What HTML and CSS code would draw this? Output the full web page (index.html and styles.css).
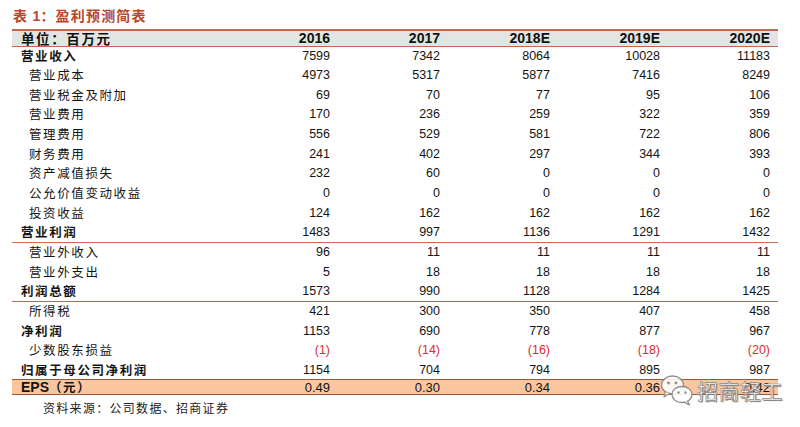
FILE: index.html
```html
<!DOCTYPE html>
<html lang="zh-CN">
<head>
<meta charset="utf-8">
<title>盈利预测简表</title>
<link rel="stylesheet" href="styles.css">
</head>
<body>
<div class="page">
  <div class="title">表 <span class="num">1</span>：盈利预测简表</div>
  <table class="fc">
    <colgroup>
      <col class="c-lbl"><col class="c-num"><col class="c-num"><col class="c-num"><col class="c-num"><col class="c-num">
    </colgroup>
    <thead>
      <tr class="hd"><th class="lbl">单位：百万元</th><th>2016</th><th>2017</th><th>2018E</th><th>2019E</th><th>2020E</th></tr>
    </thead>
    <tbody>
      <tr class="main"><td class="lbl">营业收入</td><td>7599</td><td>7342</td><td>8064</td><td>10028</td><td>11183</td></tr>
      <tr class="sub"><td class="lbl">营业成本</td><td>4973</td><td>5317</td><td>5877</td><td>7416</td><td>8249</td></tr>
      <tr class="sub"><td class="lbl">营业税金及附加</td><td>69</td><td>70</td><td>77</td><td>95</td><td>106</td></tr>
      <tr class="sub"><td class="lbl">营业费用</td><td>170</td><td>236</td><td>259</td><td>322</td><td>359</td></tr>
      <tr class="sub"><td class="lbl">管理费用</td><td>556</td><td>529</td><td>581</td><td>722</td><td>806</td></tr>
      <tr class="sub"><td class="lbl">财务费用</td><td>241</td><td>402</td><td>297</td><td>344</td><td>393</td></tr>
      <tr class="sub"><td class="lbl">资产减值损失</td><td>232</td><td>60</td><td>0</td><td>0</td><td>0</td></tr>
      <tr class="sub"><td class="lbl">公允价值变动收益</td><td>0</td><td>0</td><td>0</td><td>0</td><td>0</td></tr>
      <tr class="sub"><td class="lbl">投资收益</td><td>124</td><td>162</td><td>162</td><td>162</td><td>162</td></tr>
      <tr class="main rule"><td class="lbl">营业利润</td><td>1483</td><td>997</td><td>1136</td><td>1291</td><td>1432</td></tr>
      <tr class="sub"><td class="lbl">营业外收入</td><td>96</td><td>11</td><td>11</td><td>11</td><td>11</td></tr>
      <tr class="sub"><td class="lbl">营业外支出</td><td>5</td><td>18</td><td>18</td><td>18</td><td>18</td></tr>
      <tr class="main rule rule-dark"><td class="lbl">利润总额</td><td>1573</td><td>990</td><td>1128</td><td>1284</td><td>1425</td></tr>
      <tr class="sub"><td class="lbl">所得税</td><td>421</td><td>300</td><td>350</td><td>407</td><td>458</td></tr>
      <tr class="main"><td class="lbl">净利润</td><td>1153</td><td>690</td><td>778</td><td>877</td><td>967</td></tr>
      <tr class="sub neg"><td class="lbl">少数股东损益</td><td>(1)</td><td>(14)</td><td>(16)</td><td>(18)</td><td>(20)</td></tr>
      <tr class="main"><td class="lbl">归属于母公司净利润</td><td>1154</td><td>704</td><td>794</td><td>895</td><td>987</td></tr>
      <tr class="eps"><td class="lbl"><span class="en">EPS</span>（元）</td><td>0.49</td><td>0.30</td><td>0.34</td><td>0.36</td><td>0.42</td></tr>
    </tbody>
  </table>
  <div class="source">资料来源：公司数据、招商证券</div>

  <div class="wm">
    <svg class="wm-icon" width="34" height="32" viewBox="0 0 34 32" aria-hidden="true">
      <ellipse cx="12.5" cy="11" rx="11" ry="9" fill="#ffffff" fill-opacity="0.85" stroke="#8e8e8e" stroke-width="1.3"/>
      <path d="M5.5 18 L4 23 L9.5 19.5" fill="#ffffff" stroke="#8e8e8e" stroke-width="1.3" stroke-linejoin="round"/>
      <circle cx="8.5" cy="9" r="1.4" fill="#8e8e8e"/>
      <circle cx="16" cy="9" r="1.4" fill="#8e8e8e"/>
      <ellipse cx="22" cy="20.5" rx="10" ry="8" fill="#ffffff" fill-opacity="0.9" stroke="#8e8e8e" stroke-width="1.3"/>
      <path d="M27.5 27 L29.5 31 L24 28.2" fill="#ffffff" stroke="#8e8e8e" stroke-width="1.3" stroke-linejoin="round"/>
      <circle cx="18.5" cy="18.5" r="1.2" fill="#8e8e8e"/>
      <circle cx="25.5" cy="18.5" r="1.2" fill="#8e8e8e"/>
    </svg>
    <span class="wm-text">招商轻工</span>
  </div>
</div>
</body>
</html>
```

FILE: styles.css
```css
html, body {
  margin: 0;
  padding: 0;
  background: #ffffff;
}

.page {
  position: relative;
  width: 800px;
  height: 427px;
  padding: 0 0 0 12px;
  box-sizing: border-box;
  font-family: "Noto Sans CJK SC", "Liberation Sans", sans-serif;
  color: #111111;
}

.title {
  height: 29px;
  line-height: 30px;
  padding-left: 1px;
  font-size: 14px;
  font-weight: 700;
  letter-spacing: 1.2px;
  color: #b8462b;
}

.title .num {
  font-family: "Liberation Sans", sans-serif;
  letter-spacing: 0;
}

.fc {
  border-collapse: collapse;
  table-layout: fixed;
  width: 766px;
}

.c-lbl { width: 216px; }
.c-num { width: 110px; }

.fc th,
.fc td {
  padding: 0 8px 0 0;
  text-align: right;
  white-space: nowrap;
  line-height: 1;
}

.fc td {
  font-family: "Liberation Sans", Arial, sans-serif;
  font-size: 12.5px;
  color: #141414;
}

.hd {
  height: 16px;
  background: #e4e4e4;
  border-top: 2px solid #c4674a;
  border-bottom: 1.5px solid #c4674a;
}

.hd th {
  font-family: "Liberation Sans", Arial, sans-serif;
  font-size: 14px;
  font-weight: 700;
  color: #111111;
}

.fc .lbl {
  text-align: left;
  font-family: "Noto Sans CJK SC", sans-serif;
  font-size: 12.5px;
  letter-spacing: 1.6px;
  padding-left: 9px;
}

.hd .lbl {
  font-size: 13.5px;
  letter-spacing: 1.6px;
}

tbody tr {
  height: 19.65px;
}

.main .lbl {
  font-weight: 700;
}

.sub .lbl {
  font-weight: 400;
  padding-left: 17px;
}

.rule {
  border-bottom: 1.5px solid #c7714f;
}

.rule-dark {
  border-bottom-color: #a8705a;
}

.neg td {
  color: #e02a32;
}

.neg td.lbl {
  color: #141414;
}

.eps {
  height: 14px !important;
  background: #f9c6a0;
  border-top: 1.5px solid #9c5634;
  border-bottom: 1.5px solid #9c5634;
}

.eps td {
  font-size: 13px;
}

.eps .lbl {
  font-weight: 700;
  font-size: 12.5px;
}

.eps .en {
  font-family: "Liberation Sans", Arial, sans-serif;
  font-size: 14px;
  letter-spacing: 0;
}

.source {
  margin-top: 5px;
  padding-left: 31px;
  font-size: 12px;
  letter-spacing: 1.3px;
  color: #222222;
  line-height: 16px;
}

.wm {
  position: absolute;
  left: 660px;
  top: 374px;
  display: flex;
  align-items: center;
  gap: 3px;
}

.wm-icon {
  display: block;
}

.wm-text {
  font-family: "Noto Sans CJK SC", sans-serif;
  font-size: 21px;
  line-height: 22px;
  letter-spacing: 0.5px;
  color: #ffffff;
  -webkit-text-stroke: 0.7px #8a8a8a;
  text-shadow: 1px 1px 1px #7a7a7a;
}
```
